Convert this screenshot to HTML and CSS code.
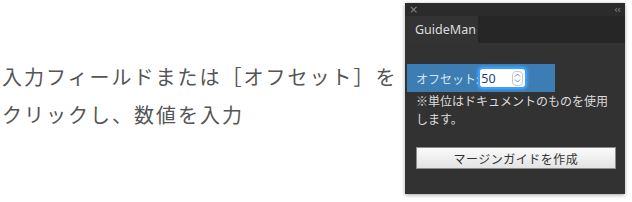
FILE: index.html
```html
<!DOCTYPE html>
<html lang="ja">
<head>
    <meta charset="UTF-8">
    <title>GuideMan</title>
    <link rel="stylesheet" href="styles.css">
</head>
<body>
    <div class="howto">
        <p>入力フィールドまたは［オフセット］を</p>
        <p>クリックし、数値を入力</p>
    </div>

    <!-- panel -->
    <div class="panel">
        <div class="panel-bar">
            <span class="close">×</span>
            <span class="collapse">‹‹</span>
        </div>
        <div class="tabs">
            <div class="tab">GuideMan</div>
        </div>
        <div class="panel-body">
            <div class="offset-row">
                <label for="offset">オフセット:</label>
                <div class="num-input">
                    <input type="text" id="offset" value="50">
                    <span class="spin">
                        <svg width="7" height="12" viewBox="0 0 7 12"><path d="M1 4.5 L3.5 2 L6 4.5 M1 7.5 L3.5 10 L6 7.5" fill="none" stroke="#7a8da6" stroke-width="1"/></svg>
                    </span>
                </div>
            </div>
            <p class="note">※単位はドキュメントのものを使用<br>します。</p>
            <button class="make-btn">マージンガイドを作成</button>
        </div>
    </div>
</body>
</html>
```

FILE: styles.css
```css
body {
    margin: 0;
    background: #ffffff;
    font-family: "Noto Sans CJK JP", "Noto Sans", sans-serif;
    display: flex;
    align-items: flex-start;
    height: 202px;
    overflow: hidden;
}
.howto {
    width: 403px;
    padding: 58px 0 0 2px;
    color: #555555;
    font-size: 20px;
    letter-spacing: 2px;
}
.howto p {
    margin: 0;
    line-height: 38px;
}
.panel {
    margin-top: 3px;
    width: 220px;
    height: 191px;
    background: #323232;
    box-shadow: 0 1px 4px rgba(0, 0, 0, 0.35);
    display: flex;
    flex-direction: column;
}
.panel-bar {
    height: 13px;
    background: #2b2b2b;
    display: flex;
    justify-content: space-between;
    align-items: center;
    padding: 0 5px 0 4px;
    color: #8a8a8a;
    font-family: "DejaVu Sans", sans-serif;
    font-size: 11px;
    line-height: 13px;
}
.collapse {
    font-size: 10px;
    letter-spacing: -1px;
}
.tabs {
    height: 27px;
    background: #262626;
    display: flex;
}
.tab {
    width: 73px;
    background: #333333;
    color: #dedede;
    font-family: "Noto Sans", sans-serif;
    font-size: 12.5px;
    padding-left: 10px;
    line-height: 28px;
    box-sizing: border-box;
}
.panel-body {
    flex: 1;
    padding-top: 21px;
}
.offset-row {
    margin-left: 2px;
    width: 148px;
    height: 28px;
    background: #3c7db3;
    display: flex;
    align-items: center;
    padding-left: 9px;
    box-sizing: border-box;
}
.offset-row label {
    color: #d8e4ee;
    font-size: 12px;
}
.num-input {
    margin-left: 1px;
    width: 45px;
    height: 18px;
    background: #ffffff;
    border-radius: 3px;
    box-shadow: 0 0 0 2px #3aa0ff, 0 0 3px 3px rgba(80, 170, 255, 0.6);
    display: flex;
    align-items: center;
}
.num-input input {
    width: 31px;
    border: none;
    outline: none;
    padding: 0 0 0 1px;
    font-family: "Noto Sans", sans-serif;
    font-size: 12.5px;
    color: #1d3f6e;
    background: transparent;
}
.spin {
    width: 9px;
    height: 13px;
    border: 1px solid #c4ccd6;
    border-radius: 4px;
    display: flex;
    align-items: center;
    justify-content: center;
}
.note {
    margin: 0 0 0 11px;
    color: #dcdcdc;
    font-size: 12px;
    line-height: 18px;
}
.make-btn {
    margin: 19px 0 0 11px;
    width: 200px;
    height: 22px;
    border: 1px solid #8c8c8c;
    background: linear-gradient(#fbfbfb, #e3e3e3);
    color: #333333;
    font-family: "Noto Sans CJK JP", sans-serif;
    font-size: 12px;
    letter-spacing: 0.5px;
    padding: 0;
}
```
